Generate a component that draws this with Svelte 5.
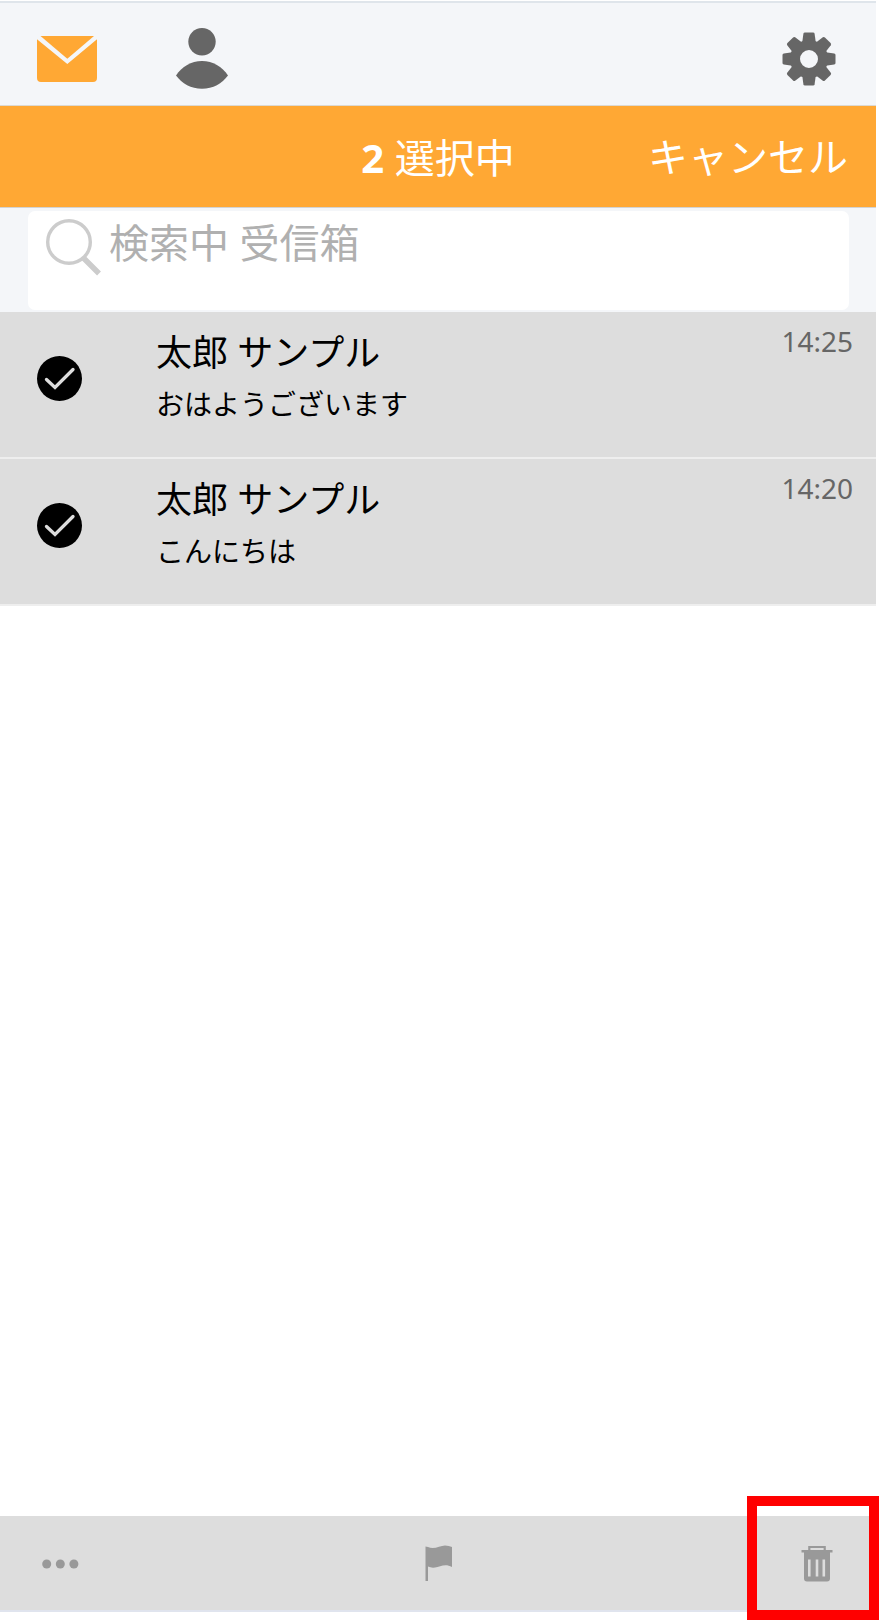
<script>
	let query = '';
	let messages = [
		{ id: 1, name: '太郎 サンプル', subject: 'おはようございます', time: '14:25', selected: true },
		{ id: 2, name: '太郎 サンプル', subject: 'こんにちは', time: '14:20', selected: true }
	];

	$: count = messages.filter((m) => m.selected).length;

	function toggle(message) {
		message.selected = !message.selected;
		messages = messages;
	}

	function cancel() {
		messages = messages.map((m) => ({ ...m, selected: false }));
	}

	function remove() {
		messages = messages.filter((m) => !m.selected);
	}
</script>

<div class="app">
	<header class="tabs">
		<button class="mail" aria-label="メール">
			<svg width="60" height="46" viewBox="0 0 60 46">
				<path d="M3.5 0H57L30.3 22.7z" fill="#ffa834" />
				<path d="M0 3.3L30.3 28L60 3.3V42a4 4 0 0 1-4 4H4a4 4 0 0 1-4-4z" fill="#ffa834" />
			</svg>
		</button>
		<button class="contacts" aria-label="連絡先">
			<svg width="52" height="61" viewBox="0 0 52 61">
				<circle cx="26" cy="13.8" r="13.7" fill="#666" />
				<path d="M0 47.5C6 38.500 15 33 26 33s20 5.500 26 14.500C46 55.500 37 60.800 26 60.800S6 55.500 0 47.500z" fill="#666" />
			</svg>
		</button>
		<button class="settings" aria-label="設定">
			<svg width="54" height="54" viewBox="-27 -27 54 54">
				<g fill="#666">
					{#each [0, 45, 90, 135, 180, 225, 270, 315] as angle}
						<path d="M-7 -15L-5.600 -25.200Q-5.400 -26.500 -4 -26.500H4Q5.400 -26.500 5.600 -25.200L7 -15z" transform="rotate({angle})" />
					{/each}
				</g>
				<circle r="14" fill="none" stroke="#666" stroke-width="10" />
			</svg>
		</button>
	</header>

	<div class="selection">
		<span></span>
		<p><b>{count}</b> 選択中</p>
		<button class="cancel" on:click={cancel}>キャンセル</button>
	</div>

	<div class="search">
		<label>
			<svg width="56" height="58" viewBox="0 0 56 58" fill="none" stroke="#ccc">
				<circle cx="23" cy="23" r="21.300" stroke-width="3.400" />
				<path d="M37.500 39L53 54.500" stroke-width="5.500" />
			</svg>
			<input bind:value={query} placeholder="検索中 受信箱" />
		</label>
	</div>

	<ul>
		{#each messages as message (message.id)}
			<li class:selected={message.selected}>
				<button class="check" aria-label="選択" on:click={() => toggle(message)}>
					<svg width="45" height="45" viewBox="0 0 45 45">
						<circle cx="22.500" cy="22.500" r="22.500" />
						{#if message.selected}
							<path d="M9.500 23.500L18 31.500L36 13.500" fill="none" stroke="#ddd" stroke-width="3.300" stroke-linecap="round" />
						{/if}
					</svg>
				</button>
				<div class="text">
					<h2>{message.name}</h2>
					<p>{message.subject}</p>
				</div>
				<time>{message.time}</time>
			</li>
		{/each}
	</ul>

	<footer>
		<button class="more" aria-label="その他">
			<svg width="37" height="10" viewBox="0 0 37 10" fill="#999">
				<circle cx="4.700" cy="5" r="4.500" />
				<circle cx="18.300" cy="5" r="4.500" />
				<circle cx="31.900" cy="5" r="4.500" />
			</svg>
		</button>
		<button class="flag" aria-label="フラグ">
			<svg width="28" height="37" viewBox="0 0 28 37" fill="#999">
				<path d="M.500 1.500L3 2C9 5 15 .500 20 .500Q24 .500 27 2V22C20 18 15 22 10 22.500Q6 23 3 21.500V36H.500z" />
			</svg>
		</button>
		<button class="trash" aria-label="削除" on:click={remove}>
			<svg width="32" height="37" viewBox="0 0 32 37">
				<path d="M8.300 6V2H23.700V6" fill="none" stroke="#999" stroke-width="2.200" />
				<path d="M.500 5H31.500V7.500H29V33.500Q29 36.500 26 36.500H6Q3 36.500 3 33.500V7.500H.500z" fill="#999" />
				<path d="M8.300 14.500V31.500M16 14.500V31.500M22.800 14.500V31.500" stroke="#ddd" stroke-width="2.600" />
			</svg>
		</button>
	</footer>

	<div class="highlight"></div>
</div>

<style>
	:global(body) {
		margin: 0;
		background: #fff;
	}

	.app {
		position: relative;
		display: flex;
		flex-direction: column;
		box-sizing: border-box;
		width: 879px;
		height: 1620px;
		padding: 1px 3px 8px 0;
		overflow: hidden;
		font-family: "Noto Sans", "Noto Sans CJK JP", sans-serif;
	}

	button {
		display: block;
		border: none;
		padding: 0;
		background: none;
		font: inherit;
		color: inherit;
	}

	svg {
		display: block;
	}

	p,
	h2 {
		margin: 0;
	}

	.tabs {
		display: flex;
		box-sizing: border-box;
		height: 105px;
		border-top: 2px solid #dfe5eb;
		border-bottom: 1px solid #dcd9d2;
		background: #f4f6f9;
	}

	.mail {
		margin: 32.500px 79px auto 37px;
	}

	.contacts {
		margin: 25px auto auto 0;
	}

	.settings {
		margin: 28.500px 40px auto 0;
	}

	.selection {
		display: grid;
		grid-template-columns: 1fr auto 1fr;
		align-items: center;
		box-sizing: border-box;
		height: 102px;
		padding-top: 2px;
		border-bottom: 1px solid #d3d3d3;
		background: #ffa834;
		color: #fff;
		font-size: 40px;
		line-height: 60px;
	}

	.cancel {
		justify-self: end;
		margin: -2px 28px 0 0;
	}

	.search {
		box-sizing: border-box;
		height: 104px;
		padding: 3px 27px 2px 27.500px;
		background: #f4f6f9;
	}

	.search label {
		display: flex;
		align-items: flex-start;
		box-sizing: border-box;
		height: 99px;
		padding: 8px 0 0 18.500px;
		border-radius: 7px;
		background: #fff;
	}

	.search input {
		flex: 1;
		min-width: 0;
		height: 60px;
		margin: -7px 0 0 7px;
		padding: 0;
		border: none;
		outline: none;
		background: none;
		font: 40px "Noto Sans", "Noto Sans CJK JP", sans-serif;
	}

	.search input::placeholder {
		color: #b0b0b0;
	}

	ul {
		flex: 1;
		margin: 0;
		padding: 0;
		list-style: none;
	}

	li {
		display: flex;
		box-sizing: border-box;
		height: 147px;
		border-bottom: 2px solid #eee;
	}

	li.selected {
		background: #ddd;
	}

	.check {
		margin: 44px 74px auto 37px;
	}

	.text {
		flex: 1;
	}

	h2 {
		margin-top: 14px;
		font-size: 36px;
		font-weight: 400;
		line-height: 54px;
	}

	.text p {
		font-size: 28px;
		line-height: 48px;
	}

	time {
		margin: 9px 23px 0 0;
		color: #666;
		font-size: 28px;
		line-height: 40px;
	}

	footer {
		display: grid;
		grid-template-columns: 1fr auto 1fr;
		align-items: center;
		height: 94px;
		border-bottom: 2px solid #e0e4ee;
		background: #ddd;
	}

	.more {
		margin: 1px 0 0 42px;
	}

	.flag {
		margin: 1px 0 0 2px;
	}

	.trash {
		justify-self: end;
		margin-right: 43px;
	}

	/* marks the delete button */
	.highlight {
		position: absolute;
		right: 0;
		bottom: 0;
		box-sizing: border-box;
		width: 132px;
		height: 124px;
		border: 10px solid #f00;
		pointer-events: none;
	}
</style>
